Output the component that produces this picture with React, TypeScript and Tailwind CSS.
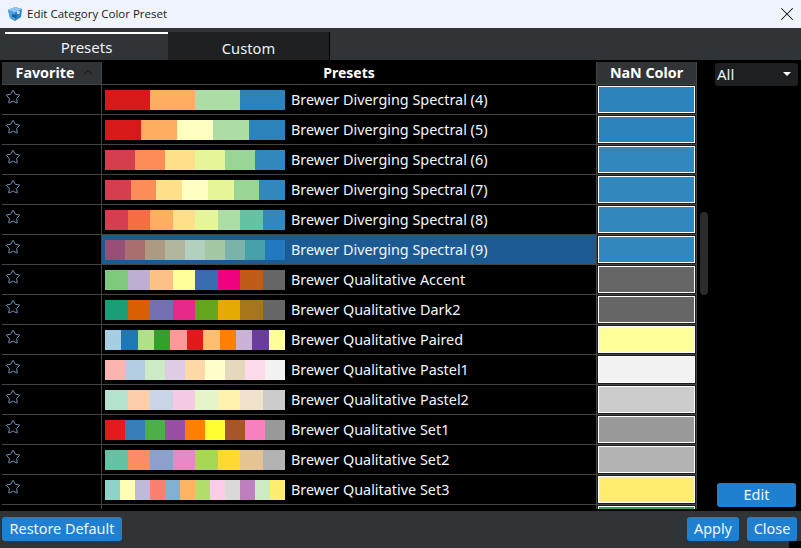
import { Star, X, ChevronUp } from "lucide-react";

const rows: [string, string[]][] = [
  ["Brewer Diverging Spectral (4)", ["#d7191c", "#fdae61", "#abdda4", "#2b83ba"]],
  ["Brewer Diverging Spectral (5)", ["#d7191c", "#fdae61", "#ffffbf", "#abdda4", "#2b83ba"]],
  ["Brewer Diverging Spectral (6)", ["#d53e4f", "#fc8d59", "#fee08b", "#e6f598", "#99d594", "#3288bd"]],
  ["Brewer Diverging Spectral (7)", ["#d53e4f", "#fc8d59", "#fee08b", "#ffffbf", "#e6f598", "#99d594", "#3288bd"]],
  ["Brewer Diverging Spectral (8)", ["#d53e4f", "#f46d43", "#fdae61", "#fee08b", "#e6f598", "#abdda4", "#66c2a5", "#3288bd"]],
  ["Brewer Diverging Spectral (9)", ["#984f77", "#a86f6e", "#ae9a82", "#b1b69c", "#b3d0bf", "#a3c8a3", "#7ab3aa", "#47a1ab", "#2279bd"]],
  ["Brewer Qualitative Accent", ["#7fc97f", "#beaed4", "#fdc086", "#ffff99", "#386cb0", "#f0027f", "#bf5b17", "#666666"]],
  ["Brewer Qualitative Dark2", ["#1b9e77", "#d95f02", "#7570b3", "#e7298a", "#66a61e", "#e6ab02", "#a6761d", "#666666"]],
  ["Brewer Qualitative Paired", ["#a6cee3", "#1f78b4", "#b2df8a", "#33a02c", "#fb9a99", "#e31a1c", "#fdbf6f", "#ff7f00", "#cab2d6", "#6a3d9a", "#ffff99"]],
  ["Brewer Qualitative Pastel1", ["#fbb4ae", "#b3cde3", "#ccebc5", "#decbe4", "#fed9a6", "#ffffcc", "#e5d8bd", "#fddaec", "#f2f2f2"]],
  ["Brewer Qualitative Pastel2", ["#b3e2cd", "#fdcdac", "#cbd5e8", "#f4cae4", "#e6f5c9", "#fff2ae", "#f1e2cc", "#cccccc"]],
  ["Brewer Qualitative Set1", ["#e41a1c", "#377eb8", "#4daf4a", "#984ea3", "#ff7f00", "#ffff33", "#a65628", "#f781bf", "#999999"]],
  ["Brewer Qualitative Set2", ["#66c2a5", "#fc8d62", "#8da0cb", "#e78ac3", "#a6d854", "#ffd92f", "#e5c494", "#b3b3b3"]],
  ["Brewer Qualitative Set3", ["#8dd3c7", "#ffffb3", "#bebada", "#fb8072", "#80b1d3", "#fdb462", "#b3de69", "#fccde5", "#d9d9d9", "#bc80bd", "#ccebc5", "#ffed6f"]],
];

const btn =
  "h-[24px] rounded-[3px] bg-[#1f80d2] text-[#f0f6fc] text-[14.4px] leading-[24px] text-center";

function Logo() {
  return (
    <svg width="16" height="16" viewBox="0 0 16 16" className="shrink-0">
      <path d="M1 4 L8 1 L15 3 L14 11 L8 15 L3 12 Z" fill="#2f7fc4" />
      <path d="M1 4 L8 6.5 L8 15 L3 12 Z" fill="#4aa3e0" />
      <path d="M1 4 L8 1 L15 3 L8 6.5 Z" fill="#8cc6ee" />
      <path d="M5 8 L10 9 L9 12 L5 11 Z" fill="#1d5fa3" />
      <path d="M10 5 L13 5 L12.5 8 L10 8 Z" fill="#bfe0f6" />
    </svg>
  );
}

export default function App() {
  return (
    <div
      className="relative flex h-[548px] w-[801px] flex-col overflow-hidden bg-[#303436] text-white"
      style={{ fontFamily: '"Noto Sans", "Open Sans", sans-serif' }}
    >
      <div className="flex h-[28px] shrink-0 items-center bg-[#eef4fa] pl-[7px] pr-[3px] text-[#1a1a1a]">
        <Logo />
        <span className="ml-[4px] flex-1 text-[11.5px] leading-[26px]" style={{ fontFamily: '"Open Sans", sans-serif' }}>
          Edit Category Color Preset
        </span>
        <X size={22} strokeWidth={1.1} className="text-[#111]" />
      </div>

      <div className="flex h-[32px] shrink-0 items-end pl-[5px]">
        <div className="h-[28px] w-[163px] border-t-2 border-white text-center text-[15px] leading-[26px] text-[#eaf2fa]">
          Presets
        </div>
        <div className="h-[28px] w-[162px] border-r border-black bg-[#1e1f21] pt-[1px] text-center text-[14.7px] leading-[31px] text-[#eaf2fa]">
          Custom
        </div>
      </div>

      <div className="flex h-[451px] shrink-0 bg-black">
        <div className="ml-[2px] mt-[2px] h-[447px] w-[695px] shrink-0 overflow-hidden">
          <div className="flex h-[23px] border-b border-[#444] text-[14.3px] font-bold leading-[22px]">
            <div className="relative w-[100px] border-r border-[#444] bg-[#303436] pr-[13px] text-center">
              Favorite
              <ChevronUp size={14} strokeWidth={1.6} className="absolute right-[6px] top-[3px] text-[#111]" />
            </div>
            <div className="w-[495px] border-r border-[#444] text-center text-[14px]">Presets</div>
            <div className="w-[100px] border-r border-[#444] bg-[#303436] text-center">NaN Color</div>
          </div>
          {rows.map(([name, colors], i) => (
            <div key={name} className="flex h-[30px] border-b border-[#444]">
              <div className="w-[100px] border-r border-[#444] pl-[3px] pt-[4px]">
                <Star size={16} strokeWidth={1.3} className="text-[#86add4]" />
              </div>
              <div
                className={`flex w-[495px] items-center border-r border-[#444] pl-[3px] ${i === 5 ? "bg-[#1c5a94]" : ""}`}
              >
                <div className="flex h-[20px] w-[180px] shrink-0">
                  {colors.map((c, j) => (
                    <div key={j} className="h-full flex-1" style={{ backgroundColor: c }} />
                  ))}
                </div>
                <span className="ml-[6px] text-[14.4px] leading-[21px] text-[#f2f7fc]">{name}</span>
              </div>
              <div className="w-[100px] border-r border-[#444] bg-[#1c1c1c] px-[1px] pt-[1px]">
                <div
                  className="h-[27px] border border-white"
                  style={{ backgroundColor: i === 5 ? "#3288bd" : colors[colors.length - 1] }}
                />
              </div>
            </div>
          ))}
          <div className="flex h-[30px]">
            <div className="w-[100px] border-r border-[#444]" />
            <div className="w-[495px] border-r border-[#444]" />
            <div className="w-[100px] border-r border-[#444] bg-[#1c1c1c] px-[1px] pt-[1px]">
              <div className="h-[27px] border border-white bg-[#2ca25f]" />
            </div>
          </div>
        </div>

        <div className="ml-[3px] mt-[152px] h-[83px] w-[8px] shrink-0 rounded-[4px] bg-[#2b2b2b]" />

        <div className="ml-[7px] flex h-[447px] w-[83px] shrink-0 flex-col items-end justify-between pt-[3px]">
          <div className="flex h-[23px] w-full items-center justify-between rounded-[3px] bg-[#1e1f21] pl-[2px] pr-[5px] text-[15px] text-[#eaf2fa]">
            All
            <svg width="10" height="5" viewBox="0 0 10 5">
              <path d="M0 0 H8 L4 4 Z" fill="#fff" />
            </svg>
          </div>
          <div className={`${btn} w-[79px] mr-[2px]`}>Edit</div>
        </div>
      </div>

      <div className="flex flex-1 items-start justify-between pl-[2px] pr-[4px] pt-[6px]">
        <div className={`${btn} w-[120px]`}>Restore Default</div>
        <div className="flex gap-[8px]">
          <div className={`${btn} w-[52px]`}>Apply</div>
          <div className={`${btn} w-[50px]`}>Close</div>
        </div>
      </div>
      <div className="absolute bottom-0 right-0 h-[7px] w-[12px] bg-black" />
    </div>
  );
}
